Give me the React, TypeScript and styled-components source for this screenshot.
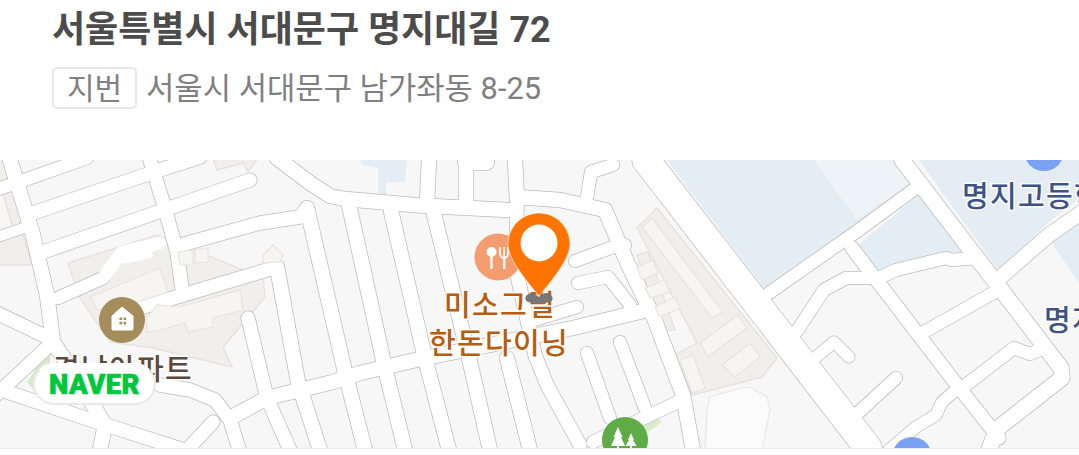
import React from "react";
import styled, { createGlobalStyle } from "styled-components";

const GlobalStyle = createGlobalStyle`
  html, body {
    margin: 0;
    padding: 0;
    background: #ffffff;
    overflow: hidden;
  }
`;

const FONT = `Roboto, "Noto Sans CJK KR", sans-serif`;

const Page = styled.div`
  width: 1079px;
  height: 455px;
  background: #ffffff;
  font-family: ${FONT};
  display: flex;
  flex-direction: column;
`;

const AddressBlock = styled.section`
  height: 160px;
  box-sizing: border-box;
  padding: 7px 0 0 52px;
  display: flex;
  flex-direction: column;
  gap: 12px;
`;

const Title = styled.h1`
  margin: 0;
  font-size: 36px;
  line-height: 46px;
  font-weight: 700;
  color: #4c4c4c;
`;

const JibunRow = styled.div`
  display: flex;
  align-items: center;
  gap: 9px;
  font-size: 30.8px;
  line-height: 42px;
  color: #808080;
`;

const JibunText = styled.span`
  padding-top: 3px;
`;

const Tag = styled.span`
  box-sizing: border-box;
  width: 85px;
  height: 42px;
  padding-top: 2px;
  border: 2px solid #e8e8e8;
  border-radius: 5px;
  display: flex;
  align-items: center;
  justify-content: center;
  font-size: 30px;
`;

const MapFrame = styled.div`
  position: relative;
  height: 288px;
  overflow: hidden;
  background: #f7f7f7;
  border-bottom: 1px solid #e8e8e8;
`;

const MapSvg = styled.svg`
  display: block;
  width: 1079px;
  height: 288px;
  filter: blur(0.3px);
`;

const PinSvg = styled.svg`
  position: absolute;
  left: 500px;
  top: 48px;
  width: 78px;
  height: 100px;
`;

const MapLabel = styled.span<{ $x: number; $y: number; $color: string }>`
  position: absolute;
  left: ${(p) => p.$x}px;
  top: ${(p) => p.$y}px;
  color: ${(p) => p.$color};
  font-size: 29px;
  line-height: 33px;
  font-weight: 500;
  white-space: nowrap;
  letter-spacing: 1.3px;
  paint-order: stroke fill;
  -webkit-text-stroke: 3px rgba(255, 255, 255, 0.85);
`;

const NaverBadge = styled.div`
  position: absolute;
  left: 33px;
  top: 203px;
  box-sizing: border-box;
  width: 123px;
  height: 42px;
  border-radius: 21px;
  background: #ffffff;
  border: 2px solid #e9e9e9;
  border-top-color: #ffffff;
  display: flex;
  align-items: center;
  justify-content: center;
  color: #00c73c;
  font-family: Roboto, sans-serif;
  font-weight: 900;
  font-size: 27.5px;
  letter-spacing: 0.4px;
  -webkit-text-stroke: 0.7px #00c73c;
`;

type Road = [number, string];

const roads: Road[] = [
  // left quarter
  [14, "10,160 33,235 47,295 53,342 75,375 105,425 100,450"],
  [12, "-5,190 10,185 87,158"],
  [13, "33,213 160,170 200,157"],
  [13, "43,252 250,180"],
  [10, "0,236 30,226"],
  [12, "58,298 103,278"],
  [13, "143,307 183,295 277,267"],
  [13, "150,160 163,202 177,252 183,295"],
  [13, "177,246 260,223 300,217 307,208"],
  [13, "248,318 267,398 290,450"],
  [14, "277,267 298,382 320,450"],
  [14, "307,208 345,372 365,450"],
  [14, "277,158 310,183 330,196 345,199 420,205.5 508,210"],
  [14, "349,205 385,368 405,450"],
  [13, "-5,312 53,340"],
  [13, "53,342 -5,396"],
  [13, "-5,388 100,423 190,452"],
  [13, "160,385 190,390 215,400 230,420 240,452"],
  [13, "213,422 187,450"],
  [14, "230,418 267,398 333,382 360,373 420,359 573,328 647,310"],
  // middle blocks
  [14, "391,211 425,358 449,450"],
  [14, "434,214 470,362 490,450"],
  [14, "507,358 530,450"],
  [13, "517,205 516,270 535,355 547,385 580,445"],
  [14, "429,160 427,203"],
  [14, "466,160 466,200"],
  [16, "466,162 486,162"],
  [14, "515,160 517,200"],
  [14, "517,197 560,200 605,210 627,262 654,318 683,395 693,450"],
  [12, "587,197 591,172 613,165"],
  [12, "575,261 613,247 625,245"],
  [12, "578,283 608,277 630,305"],
  [12, "527,322 577,307"],
  [12, "587,353 610,418"],
  [12, "620,342 645,408"],
  [12, "593,442 680,401"],
  // right side
  [27, "646,160 771,322 868,448"],
  [12, "916,188 856,232 769,293"],
  [15, "902,160 1061,368 1062,378 997,429 988,452"],
  [12, "797,331 824,290 846,278 879,278 896,270 946,258 952,260 976,258"],
  [13, "852,248 957,385 999,438"],
  [12, "924,332 1002,288"],
  [12, "966,385 1014,348 1030,354 1041,349"],
  [11, "816,357 834,342 849,357"],
  [12, "859,412 896,378"],
  [11, "889,450 916,427 936,415 942,402 956,390"],
  [14, "1002,276 1049,235 1085,210"],
];

// lanes inside an estate, drawn with no kerb line
const lanes: Road[] = [
  [12, "103,278 122,252 160,243"],
  [6, "125,260 150,255"],
];

const Roads = ({ list, casing }: { list: Road[]; casing: boolean }) => (
  <>
    {casing && (
      <g fill="none" strokeLinecap="round" strokeLinejoin="round" stroke="#bcbcbc">
        {list.map(([w, pts], i) => (
          <polyline key={i} points={pts} strokeWidth={w + 2} />
        ))}
      </g>
    )}
    <g fill="none" strokeLinecap="round" strokeLinejoin="round" stroke="#ffffff">
      {list.map(([w, pts], i) => (
        <polyline key={i} points={pts} strokeWidth={w + 0.5} />
      ))}
    </g>
  </>
);

const MapDrawing = () => (
  <MapSvg viewBox="0 160 1079 288">
    {/* school and water areas */}
    <polygon points="667,160 764,288 859,222 915,185 894,160" fill="#e4ecf4" />
    <polygon points="814,160 857,220 911,183 894,160" fill="#eef3f8" />
    <polygon points="858,245 919,195 965,253 946,252 895,265 878,272" fill="#e4ecf4" />
    <polygon points="919,160 998,270 1049,222 1079,198 1079,160" fill="#e4ecf4" />
    <polygon points="1050,240 1079,218 1079,283" fill="#e4ecf4" />
    <polygon points="360,160 362,165 378,168 378,195 386,195 386,182 405,182 407,160" fill="#e4edf5" />
    {/* apartment grounds */}
    <g fill="#f1efec" stroke="#e6e3de" strokeWidth="1.5">
      <polygon points="68,263 157,235 263,278 265,297 223,347 232,367 153,348 110,342 80,298" />
      <polygon points="-2,238 23,234 32,265 -2,265" />
      <polygon points="5,158 22,225 13,227 -2,178 -2,158" />
      <polygon points="213,158 217,170 243,163 248,172 258,158" />
      <polygon points="637,228 657,208 777,358 762,377 692,395 675,355 697,343" />
      <polygon points="637,255 648,252 675,330 660,330" />
    </g>
    <polygon points="705,450 707,410 710,397 733,390 742,388 750,387 767,397 770,410 762,450" fill="#fbfbfb" stroke="#ebebeb" strokeWidth="1.5" />
    <polygon points="640,427 658,418 662,422 648,432" fill="#d9ebc9" />
    <polygon points="52,345 28,382 42,400" fill="#d8eac8" stroke="#cfe3bd" />
    {/* road casing, then the road itself */}
    <Roads list={roads} casing />
    <Roads list={lanes} casing={false} />
    {/* apartment buildings */}
    <g fill="#f6f5f2" stroke="#e7e4df" strokeWidth="1.2">
      <polygon points="90,297 160,268 168,292 138,302 97,310" />
      <polygon points="147,318 157,305 180,307 240,290 243,310 213,318 213,327 188,332 185,323 160,330 147,332" />
      <polygon points="178,252 193,250 193,265 180,265" />
      <polygon points="195,250 208,248 208,262 195,263" />
      <polygon points="263,255 273,245 283,255 280,262 263,263" />
      <polygon points="642,227 652,218 723,312 712,318" />
      <polygon points="700,343 738,315 747,328 708,357" />
      <polygon points="722,365 750,343 760,357 735,377" />
      <polygon points="680,360 693,355 705,388 692,393" />
      <polygon points="637,268 653,260 658,273 642,280" />
      <polygon points="645,288 665,280 670,292 650,298" />
      <polygon points="655,307 675,297 680,308 660,317" />
    </g>
    {/* poi circles */}
    <circle cx="1044" cy="151" r="20" fill="#7ba1f5" />
    <circle cx="912" cy="457" r="20" fill="#7ba1f5" />

    <circle cx="122" cy="320" r="23" fill="#a58c5b" />
    <path d="M112 316 L122 307 L133 316 V329 Q133 330 132 330 H113 Q112 330 112 329 Z" fill="#ffffff" stroke="#ffffff" strokeLinejoin="round" />
    <g fill="#a58c5b">
      <rect x="119.5" y="317.5" width="2.6" height="2.6" />
      <rect x="123.5" y="317.5" width="2.6" height="2.6" />
      <rect x="119.5" y="321.8" width="2.6" height="2.6" />
      <rect x="123.5" y="321.8" width="2.6" height="2.6" />
    </g>

    <circle cx="498" cy="257" r="23.5" fill="#f49d70" />
    <g fill="#ffffff">
      <circle cx="491.5" cy="252" r="5" />
      <rect x="490.3" y="254" width="2.4" height="15" />
      <rect x="503" y="256" width="2.4" height="13" />
    </g>
    <path d="M500 247 V253 Q500 258 504 258 Q508 258 508 253 V247 M504 247 V258" fill="none" stroke="#ffffff" strokeWidth="1.6" />

    <circle cx="625" cy="440" r="23" fill="#5fab45" />
    <g fill="#ffffff">
      <path d="M618 427 L622.5 437 H621 L625 446 H611 L615 437 H613.5 Z" />
      <path d="M631 433 L634 440 H633 L636.5 446 H625.5 L629 440 H628 Z" />
      <rect x="617" y="445" width="2" height="4" />
      <rect x="630" y="445" width="2" height="4" />
    </g>
  </MapSvg>
);

const LocationPin = () => (
  <PinSvg viewBox="500 208 78 100">
    <path d="M526 296 Q530 291 535 294 L539 297 L543 294 Q548 291 552 296 Q554 300 550 302 L544 303 L539 304 L534 303 L528 302 Q524 300 526 296 Z" fill="#777777" />
    <path d="M539 213 C556 213 570 227 570 244 C570 258 555 277 539 296 C523 277 508 258 508 244 C508 227 522 213 539 213 Z" fill="#ff7300" stroke="#ffffff" strokeOpacity="0.6" strokeWidth="1" />
    <circle cx="539" cy="243" r="18.5" fill="#ffffff" />
  </PinSvg>
);

const App = () => (
  <Page>
    <GlobalStyle />
    <AddressBlock>
      <Title>서울특별시 서대문구 명지대길 72</Title>
      <JibunRow>
        <Tag>지번</Tag>
        <JibunText>서울시 서대문구 남가좌동 8-25</JibunText>
      </JibunRow>
    </AddressBlock>
    <MapFrame>
      <MapDrawing />
      <MapLabel $x={444} $y={130} $color="#b85c0f">미소그릴</MapLabel>
      <MapLabel $x={429} $y={168} $color="#b85c0f">한돈다이닝</MapLabel>
      <MapLabel $x={53} $y={194} $color="#5c4a40">경남아파트</MapLabel>
      <MapLabel $x={962} $y={21} $color="#3d5286">명지고등학교</MapLabel>
      <MapLabel $x={1044} $y={145} $color="#3d5286">명지고</MapLabel>
      <LocationPin />
      <NaverBadge>NAVER</NaverBadge>
    </MapFrame>
  </Page>
);

export default App;
